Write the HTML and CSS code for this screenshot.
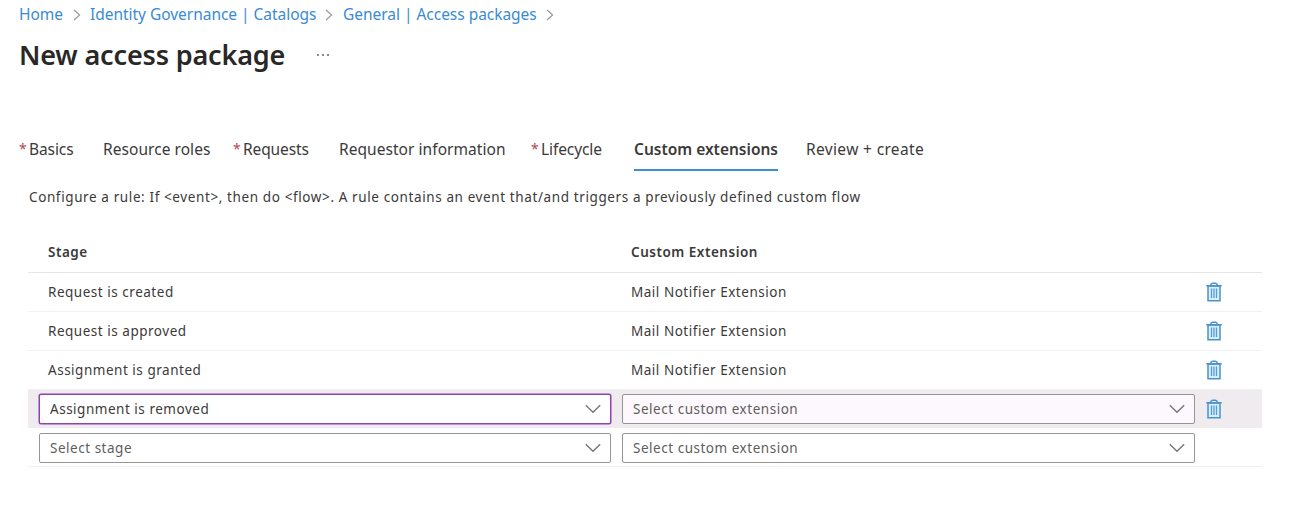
FILE: index.html
```html
<!DOCTYPE html>
<html lang="en">
<head>
<meta charset="utf-8">
<title>New access package</title>
<link rel="stylesheet" href="styles.css">
</head>
<body>
<svg class="defs" width="0" height="0" aria-hidden="true">
  <symbol id="sep" viewBox="0 0 8 12"><path d="M1 1l5.6 5L1 11" fill="none" stroke="#9a9a9a" stroke-width="1.2"/></symbol>
  <symbol id="down" viewBox="0 0 16 10"><path d="M.8 1.2L8 8.2l7.200-7" fill="none" stroke="#767676" stroke-width="1.4"/></symbol>
  <symbol id="trash" viewBox="0 0 16 20">
    <path d="M2 4h12v14.800H2z" fill="#d5efff" stroke="#4c92ca" stroke-width="1.500"/>
    <path d="M.3 3.800h15.400M4.500 3.500Q5 1.200 6.500 1.200h3Q11 1.200 11.500 3.500" fill="none" stroke="#4c92ca" stroke-width="1.400"/>
    <path d="M5.500 6.500v9.500M8 6.500v9.500M10.500 6.500v9.500" fill="none" stroke="#5a9bd0" stroke-width="1.300"/>
  </symbol>
</svg>
<main class="page">
  <nav class="crumbs">
    <a class="crumb crumb-home">Home</a><svg class="sep"><use href="#sep"/></svg>
    <a class="crumb crumb-catalogs">Identity Governance | Catalogs</a><svg class="sep"><use href="#sep"/></svg>
    <a class="crumb crumb-packages">General | Access packages</a><svg class="sep"><use href="#sep"/></svg>
  </nav>
  <header class="heading">
    <h1 class="title">New access package</h1>
    <span class="more"><i class="dot"></i><i class="dot"></i><i class="dot"></i></span>
  </header>
  <nav class="tabs">
    <a class="tab"><span class="req">*</span><span class="t-basics">Basics</span></a>
    <a class="tab"><span class="t-roles">Resource roles</span></a>
    <a class="tab"><span class="req">*</span><span class="t-requests">Requests</span></a>
    <a class="tab"><span class="t-info">Requestor information</span></a>
    <a class="tab"><span class="req">*</span><span class="t-life">Lifecycle</span></a>
    <a class="tab active"><span class="t-ext">Custom extensions</span></a>
    <a class="tab"><span class="t-review">Review + create</span></a>
  </nav>
  <p class="intro">Configure a rule: If &lt;event&gt;, then do &lt;flow&gt;. A rule contains an event that/and triggers a previously defined custom flow</p>
  <section class="table">
    <div class="row head"><span class="cell">Stage</span><span class="cell">Custom Extension</span></div>
    <div class="row"><span class="cell">Request is created</span><span class="cell">Mail Notifier Extension</span><svg class="trash"><use href="#trash"/></svg></div>
    <div class="row"><span class="cell">Request is approved</span><span class="cell">Mail Notifier Extension</span><svg class="trash"><use href="#trash"/></svg></div>
    <div class="row"><span class="cell">Assignment is granted</span><span class="cell">Mail Notifier Extension</span><svg class="trash"><use href="#trash"/></svg></div>
    <div class="row selected">
      <div class="select focused"><span>Assignment is removed</span><svg class="down"><use href="#down"/></svg></div>
      <div class="select tinted"><span>Select custom extension</span><svg class="down"><use href="#down"/></svg></div>
      <svg class="trash"><use href="#trash"/></svg>
    </div>
    <div class="row last">
      <div class="select"><span>Select stage</span><svg class="down"><use href="#down"/></svg></div>
      <div class="select"><span>Select custom extension</span><svg class="down"><use href="#down"/></svg></div>
    </div>
  </section>
</main>
</body>
</html>
```
FILE: styles.css
```css
* { box-sizing: border-box; }
body { margin: 0; background: #fff; color: #3b3a39; font-family: "Noto Sans", "Open Sans", sans-serif; font-size: 13.500px; letter-spacing: .52px; }
.defs { display: block; height: 0; }
.page { height: 514px; overflow: hidden; white-space: nowrap; }
.crumbs { display: grid; grid-template-columns: 54px 17px 235px 18px 203px 10px; align-items: center; height: 29px; padding-left: 19px; font-size: 15.500px; line-height: 26px; letter-spacing: 0; color: #3a8bd3; }
.crumb { height: 28px; }
.crumb-catalogs, .crumb-packages { letter-spacing: -.03px; }
.sep { width: 8px; height: 12px; margin-top: 1px; }
.heading { display: flex; align-items: center; height: 52px; padding-left: 19px; }
.title { width: 298px; margin: 0; font-size: 27px; font-weight: 600; line-height: 52px; letter-spacing: -.16px; color: #292827; }
.more { display: flex; gap: 3px; }
.dot { width: 2px; height: 2px; background: #8a8a8a; }
.tabs { display: grid; grid-template-columns: 84px 130px 106px 192px 103px 172px 130px; height: 41px; margin-top: 48px; padding-left: 19px; font-size: 15.500px; line-height: 40px; letter-spacing: 0; }
.tab { display: flex; }
.t-roles, .t-info { letter-spacing: .05px; }
.t-basics, .t-requests, .t-life { letter-spacing: -.1px; }
.t-review { letter-spacing: .35px; }
.req { width: 10px; color: #b5474f; font-size: 14px; }
.active { width: 144px; border-bottom: 2px solid #3f8fd6; font-weight: 600; }
.intro { height: 24px; margin: 15px 0 0 29px; line-height: 25px; letter-spacing: .61px; }
.table { width: 1234px; margin: 23px 0 0 28px; }
.row { display: grid; grid-template-columns: 572px 573px 16px; column-gap: 11px; align-items: center; height: 39px; padding-left: 11px; border-bottom: 1px solid #f1f1f1; }
.head { height: 41px; border-bottom-color: #e6e6e6; font-weight: 600; }
.cell { padding-left: 9px; }
.trash { width: 16px; height: 20px; }
.selected { background: #efebef; border-bottom-color: #fff; }
.last { height: 38px; }
.select { display: flex; align-items: center; justify-content: space-between; height: 30px; padding: 0 9px 0 10px; border: 1px solid #979593; border-radius: 2px; background: #fff; color: #605e5c; }
.focused { border-color: #9242b0; box-shadow: 0 0 0 .5px #9242b0; color: #3b3a39; }
.tinted { background: #fdf8fd; }
.down { width: 16px; height: 10px; }
```
